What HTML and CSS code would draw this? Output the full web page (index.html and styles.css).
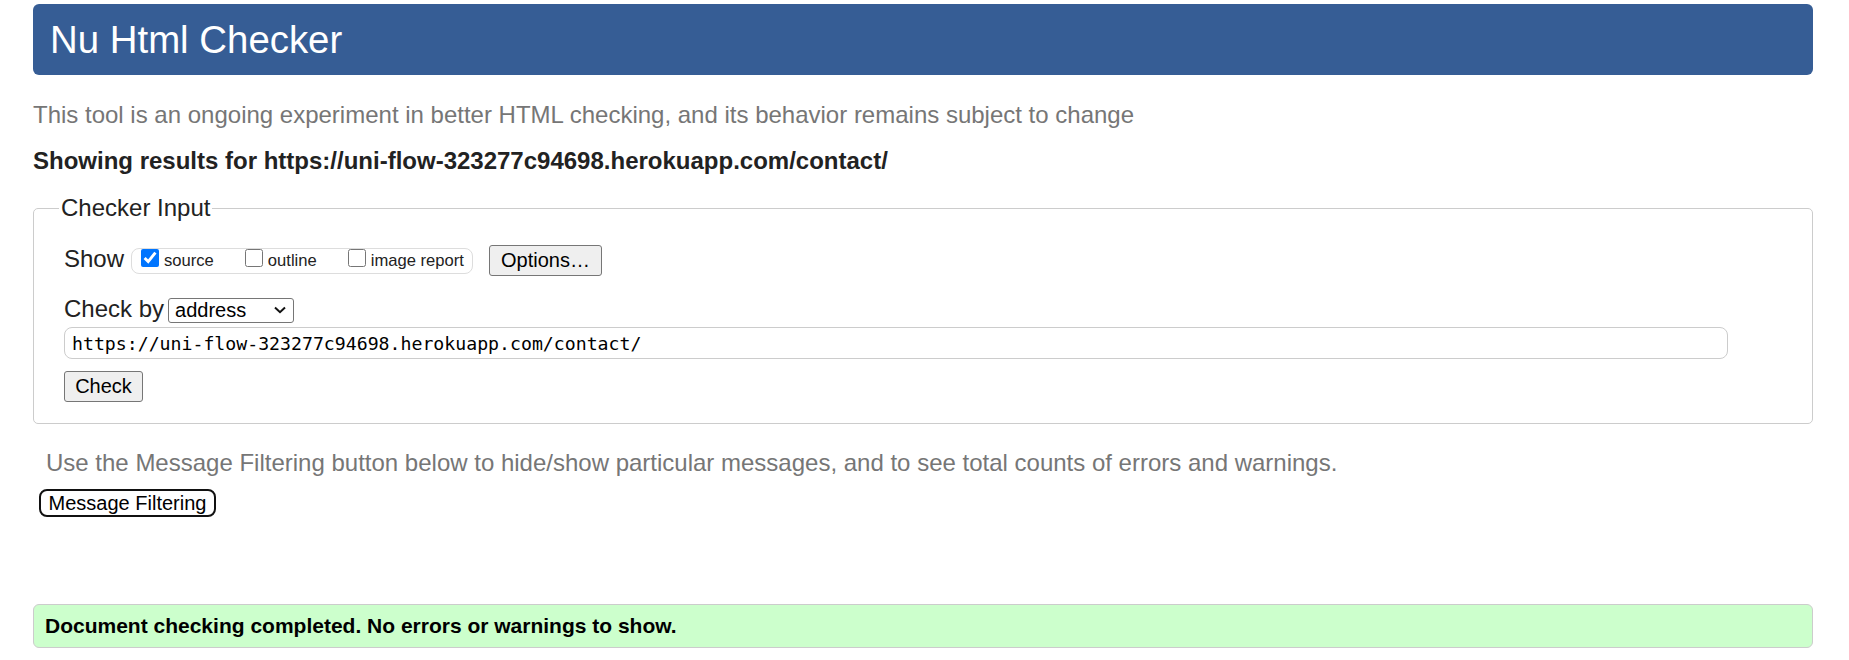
FILE: index.html
```html
<!DOCTYPE html>
<html lang="en">
<head>
<meta charset="utf-8">
<title>Nu Html Checker</title>
<link rel="stylesheet" href="styles.css">
</head>
<body>
<h1 class="title">Nu Html Checker</h1>
<p class="tagline">This tool is an ongoing experiment in better HTML checking, and its behavior remains subject to change</p>
<p class="showing">Showing results for https://uni-flow-323277c94698.herokuapp.com/contact/</p>
<fieldset class="checker">
  <legend class="legend">Checker Input</legend>
  <div class="row show-row">
    <span class="lbl">Show</span>
    <span class="group">
      <label class="opt"><input class="cb" type="checkbox" checked>source</label>
      <label class="opt"><input class="cb" type="checkbox">outline</label>
      <label class="opt"><input class="cb" type="checkbox">image report</label>
    </span>
    <button class="btn options-btn" type="button">Options…</button>
  </div>
  <div class="row by-row">
    <span class="lbl">Check by</span>
    <span class="select-wrap">
      <select class="select"><option>address</option></select>
      <svg class="chev" width="12" height="8" viewBox="0 0 12 8"><path d="M1 1.5 L6 6.2 L11 1.5" fill="none" stroke="#111" stroke-width="2"/></svg>
    </span>
  </div>
  <input class="url" type="text" value="https://uni-flow-323277c94698.herokuapp.com/contact/">
  <button class="btn check-btn" type="button">Check</button>
</fieldset>
<p class="usage">Use the Message Filtering button below to hide/show particular messages, and to see total counts of errors and warnings.</p>
<button class="filter-btn" type="button">Message Filtering</button>
<div class="result">Document checking completed. No errors or warnings to show.</div>
</body>
</html>
```
FILE: styles.css
```css
html, body {
  background: #fff;
}
body {
  margin: 0;
  padding: 4px 36px 0 33px;
  font-family: "Liberation Sans", Arial, sans-serif;
  color: #222;
}
.title {
  margin: 0;
  height: 71px;
  line-height: 71px;
  padding-left: 17px;
  background: #365d95;
  color: #fff;
  font-size: 38.4px;
  font-weight: normal;
  border-radius: 6px;
}
.tagline {
  margin: 26px 0 0;
  font-size: 24px;
  line-height: 28px;
  color: #767676;
}
.showing {
  margin: 18px 0 0;
  font-size: 24px;
  line-height: 28px;
  font-weight: bold;
  color: #222;
}
.checker {
  margin: 19px 0 0;
  padding: 23px 30px 21px;
  border: 1px solid #ccc;
  border-radius: 5px;
  min-width: 0;
}
.legend {
  margin-left: -5px;
  padding: 0 2px;
  font-size: 24px;
  line-height: 28px;
  color: #222;
}
.row {
  display: flex;
  align-items: baseline;
}
.lbl {
  font-size: 24px;
  line-height: 28px;
  color: #222;
}
.group {
  display: flex;
  align-items: center;
  height: 24px;
  margin-left: 7px;
  padding: 0 8px 0 9px;
  border: 1px solid #ddd;
  border-radius: 8px;
}
.opt {
  display: flex;
  align-items: center;
  height: 24px;
  font-size: 16.6px;
  line-height: 18px;
  color: #222;
}
.opt + .opt {
  margin-left: 31px;
}
.cb {
  align-self: flex-start;
  width: 18px;
  height: 18px;
  margin: 0 5px 0 0;
}
.btn {
  box-sizing: border-box;
  height: 31px;
  padding: 0;
  font-family: "Liberation Sans", Arial, sans-serif;
  font-size: 20px;
  color: #000;
  background: #efefef;
  border: 1px solid #767676;
  border-radius: 3px;
}
.options-btn {
  width: 113px;
  margin-left: 16px;
}
.by-row {
  margin-top: 19px;
}
.select-wrap {
  box-sizing: border-box;
  display: flex;
  align-items: center;
  width: 126px;
  height: 25px;
  margin-left: 4px;
  padding: 0 7px 0 6px;
  border: 1px solid #767676;
  border-radius: 3px;
  background: #fff;
}
.select {
  flex: 1;
  min-width: 0;
  padding: 0;
  border: 0;
  background: transparent;
  font-family: "Liberation Sans", Arial, sans-serif;
  font-size: 20px;
  color: #000;
  appearance: none;
  -webkit-appearance: none;
  outline: none;
}
.chev {
  display: block;
}
.url {
  box-sizing: border-box;
  display: block;
  width: 1664px;
  height: 32px;
  margin: 4px 0 0;
  padding: 0 7px;
  border: 1px solid #ccc;
  border-radius: 8px;
  font-family: "DejaVu Sans Mono", "Liberation Mono", monospace;
  font-size: 18.2px;
  color: #000;
  background: #fff;
}
.check-btn {
  display: block;
  width: 79px;
  margin-top: 12px;
}
.usage {
  margin: 25px 0 0;
  padding-left: 13px;
  font-size: 24px;
  line-height: 28px;
  color: #767676;
}
.filter-btn {
  box-sizing: border-box;
  display: block;
  width: 177px;
  height: 28px;
  margin: 12px 0 0 6px;
  padding: 0;
  border: 2px solid #111;
  border-radius: 8px;
  background: #fff;
  font-family: "Liberation Sans", Arial, sans-serif;
  font-size: 20px;
  color: #000;
}
.result {
  margin-top: 87px;
  padding: 0 11px;
  border: 1px solid #ccc;
  border-radius: 6px;
  background: #ccffcc;
  line-height: 42px;
  font-size: 21px;
  font-weight: bold;
  color: #000;
}
```
